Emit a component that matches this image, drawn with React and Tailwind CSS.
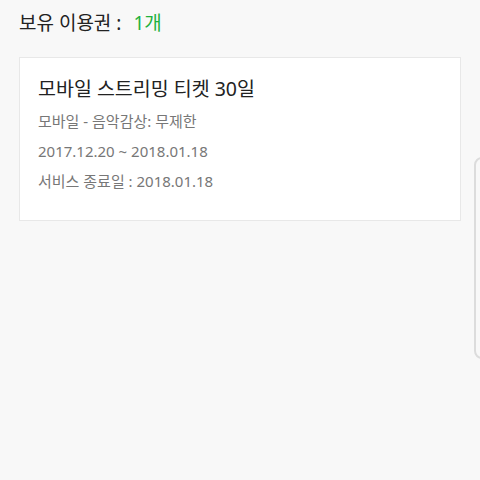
export default function App() {
  return (
    <div
      className="relative w-[480px] h-[480px] overflow-hidden bg-[#f8f8f8]"
      style={{ fontFamily: '"Noto Sans", "Noto Sans CJK KR", sans-serif' }}
    >
      <div className="px-[19px] pt-[9px]">
        <div className="flex items-center h-[28px] text-[19px] text-[#222]">
          <span>보유 이용권 :</span>
          <span className="ml-[12px] text-[#1fb23e]">1개</span>
        </div>
        <div className="mt-[20px] bg-white border border-[#e8e8e8] h-[164px] px-[18px] pt-[17px]">
          <div className="text-[19.5px] leading-[28px] text-[#222]">모바일 스트리밍 티켓 30일</div>
          <div className="mt-[3px] text-[15px] leading-[30px] text-[#777]">
            <div>모바일 - 음악감상: 무제한</div>
            <div>2017.12.20 ~ 2018.01.18</div>
            <div>서비스 종료일 : 2018.01.18</div>
          </div>
        </div>
      </div>
      <div className="absolute right-[-4px] top-[157px] w-[10px] h-[202px] rounded-l-[8px] border-2 border-[#dcdcdc]" />
    </div>
  );
}
